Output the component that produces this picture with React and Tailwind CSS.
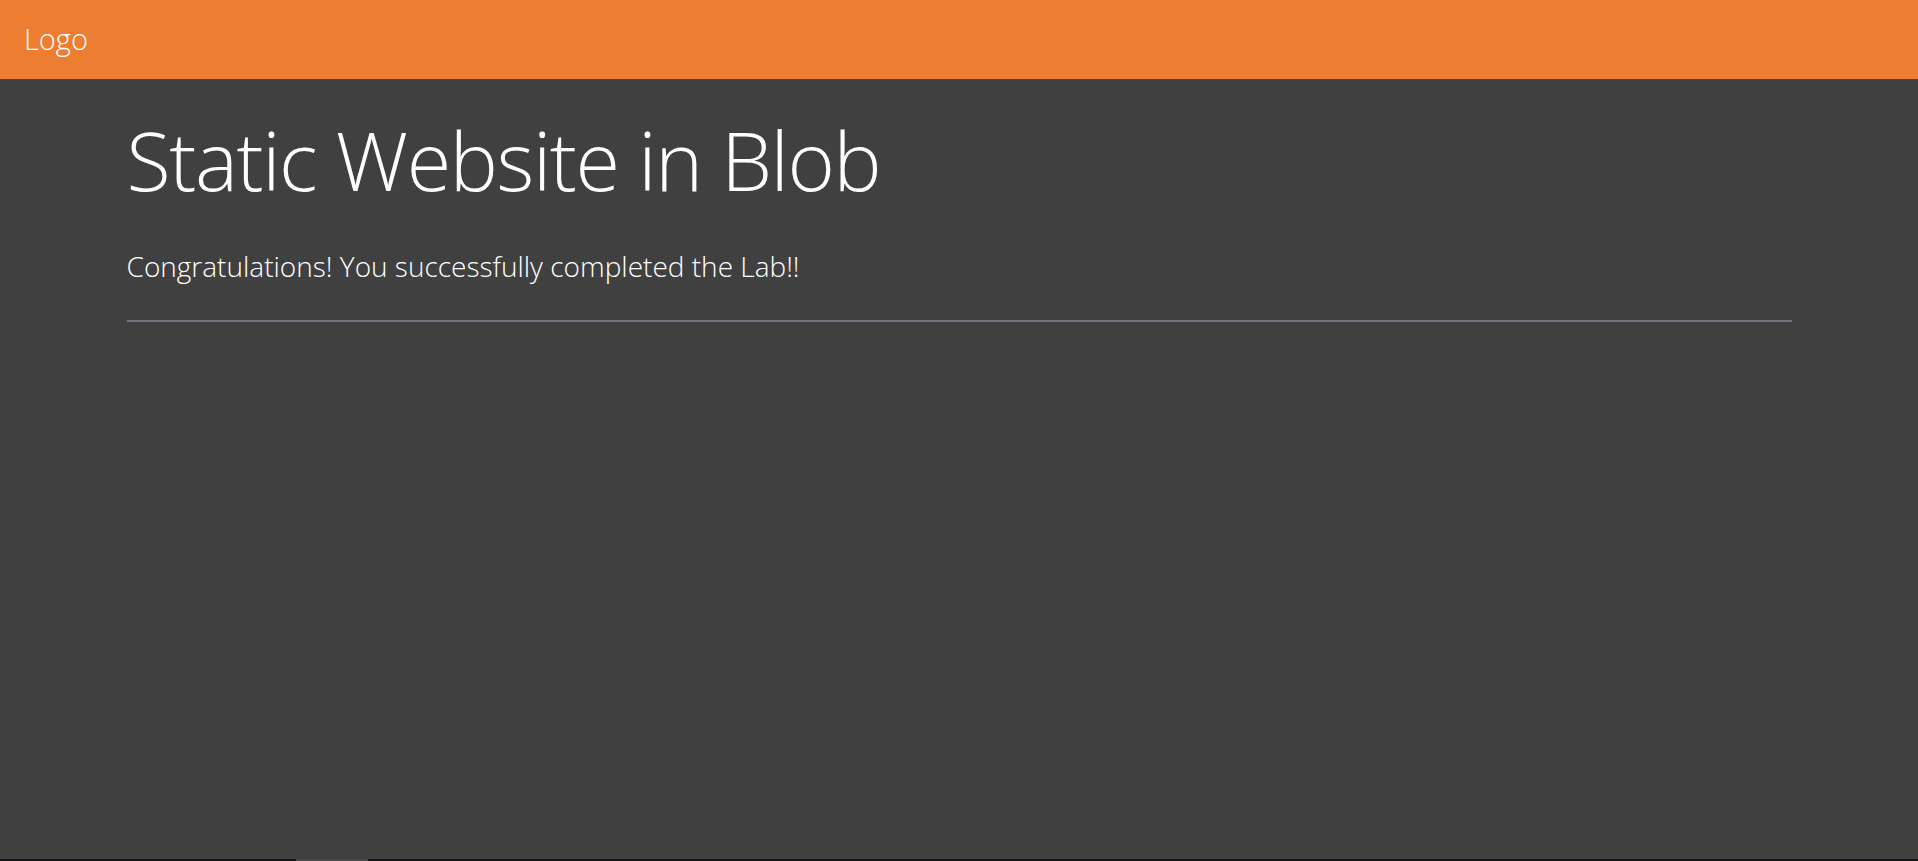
export default function App() {
  return (
    <div className="min-h-screen flex flex-col bg-[#404040] text-white" style={{ fontFamily: '"Open Sans", "Noto Sans", sans-serif' }}>
      <header className="h-[79px] bg-[#ED7D31] flex items-center px-[24px]">
        <span className="text-[29px] font-light leading-none -mt-[2px]">Logo</span>
      </header>
      <main className="flex-1">
        <div className="max-w-[1710px] mx-auto px-[22.5px]">
          <h1 className="mt-[32px] text-[81px] font-light leading-[1.2] tracking-[-1.4px]">Static Website in Blob</h1>
          <p className="mt-[37px] text-[28px] font-light leading-[1.5]">Congratulations! You successfully completed the Lab!!</p>
          <hr className="mt-[33px] border-0 h-[2px] bg-[#6c757d]" />
        </div>
      </main>
      <div className="h-[2px] bg-[#15171c] flex">
        <div className="ml-[296px] w-[72px] bg-[#4a4a4a]" />
      </div>
    </div>
  );
}
